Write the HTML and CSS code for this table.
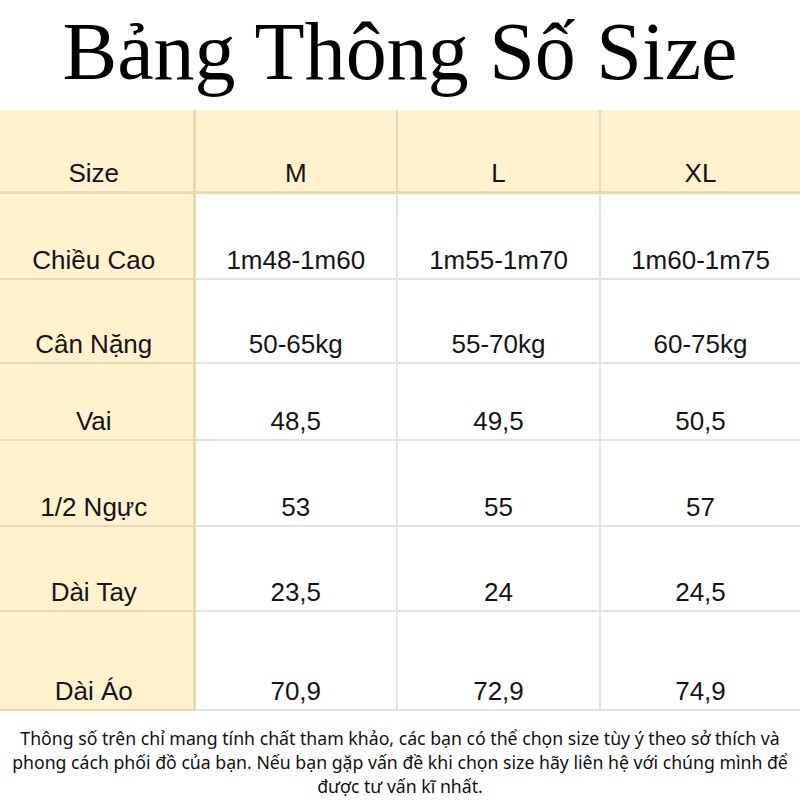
FILE: index.html
```html
<!DOCTYPE html>
<html lang="vi">
<head>
<meta charset="utf-8">
<title>Bảng Thông Số Size</title>
<link rel="stylesheet" href="styles.css">
</head>
<body>
<div class="page">
  <h1 class="title">Bảng Thông Số Size</h1>
  <table class="size-table">
    <colgroup>
      <col class="c1"><col class="c2"><col class="c3"><col class="c4">
    </colgroup>
    <thead>
      <tr class="r-head">
        <th class="lab">Size</th><th>M</th><th>L</th><th>XL</th>
      </tr>
    </thead>
    <tbody>
      <tr class="r1"><th class="lab">Chiều Cao</th><td>1m48-1m60</td><td>1m55-1m70</td><td>1m60-1m75</td></tr>
      <tr class="r2"><th class="lab">Cân Nặng</th><td>50-65kg</td><td>55-70kg</td><td>60-75kg</td></tr>
      <tr class="r3"><th class="lab">Vai</th><td>48,5</td><td>49,5</td><td>50,5</td></tr>
      <tr class="r4"><th class="lab">1/2 Ngực</th><td>53</td><td>55</td><td>57</td></tr>
      <tr class="r5"><th class="lab">Dài Tay</th><td>23,5</td><td>24</td><td>24,5</td></tr>
      <tr class="r6"><th class="lab">Dài Áo</th><td>70,9</td><td>72,9</td><td>74,9</td></tr>
    </tbody>
  </table>
  <p class="note">Thông số trên chỉ mang tính chất tham khảo, các bạn có thể chọn size tùy ý theo sở thích và<br>phong cách phối đồ của bạn. Nếu bạn gặp vấn đề khi chọn size hãy liên hệ với chúng mình để<br>được tư vấn kĩ nhất.</p>
</div>
</body>
</html>
```
FILE: styles.css
```css
html, body {
  margin: 0;
  padding: 0;
  background: #ffffff;
}
.page {
  width: 800px;
  height: 800px;
  overflow: hidden;
}
.title {
  margin: 0;
  padding: 12px 0 18px;
  height: 80px;
  line-height: 80px;
  font-family: "Liberation Serif", "DejaVu Serif", serif;
  font-weight: normal;
  font-size: 82px;
  text-align: center;
  color: #000;
  white-space: nowrap;
}
.size-table {
  width: 800px;
  border-collapse: collapse;
  table-layout: fixed;
  font-family: "Liberation Sans", Arial, sans-serif;
  font-size: 26px;
  color: #151515;
}
.c1 { width: 194px; }
.c2 { width: 203px; }
.c3 { width: 203px; }
.c4 { width: 200px; }
.size-table th,
.size-table td {
  font-weight: normal;
  text-align: center;
  vertical-align: bottom;
  padding: 0 0 4px;
  line-height: 27px;
  white-space: nowrap;
  border-left: 2px solid #e3e3e3;
  border-bottom: 2px solid #e3e3e3;
}
.size-table tr > :first-child { border-left: none; }
.size-table thead th {
  background: #fff2cc;
  border-bottom: 3px solid #e8dab6;
  border-left: 2px solid #e8dab6;
}
.size-table .lab {
  background: #fff2cc;
  padding-right: 5px;
  border-right: 3px solid #e8dab6;
}
.size-table tbody .lab { border-bottom-color: #e8dab6; }
.r-head { height: 82px; }
.r1 { height: 87px; }
.r2 { height: 84px; }
.r3 { height: 77px; }
.r4 { height: 86px; }
.r5 { height: 85px; }
.r6 { height: 99px; }
.note {
  margin: 0;
  padding: 15px 0 0;
  font-family: "Noto Sans", "Open Sans", sans-serif;
  font-size: 17.7px;
  line-height: 24px;
  text-align: center;
  white-space: nowrap;
  color: #111;
}
```
